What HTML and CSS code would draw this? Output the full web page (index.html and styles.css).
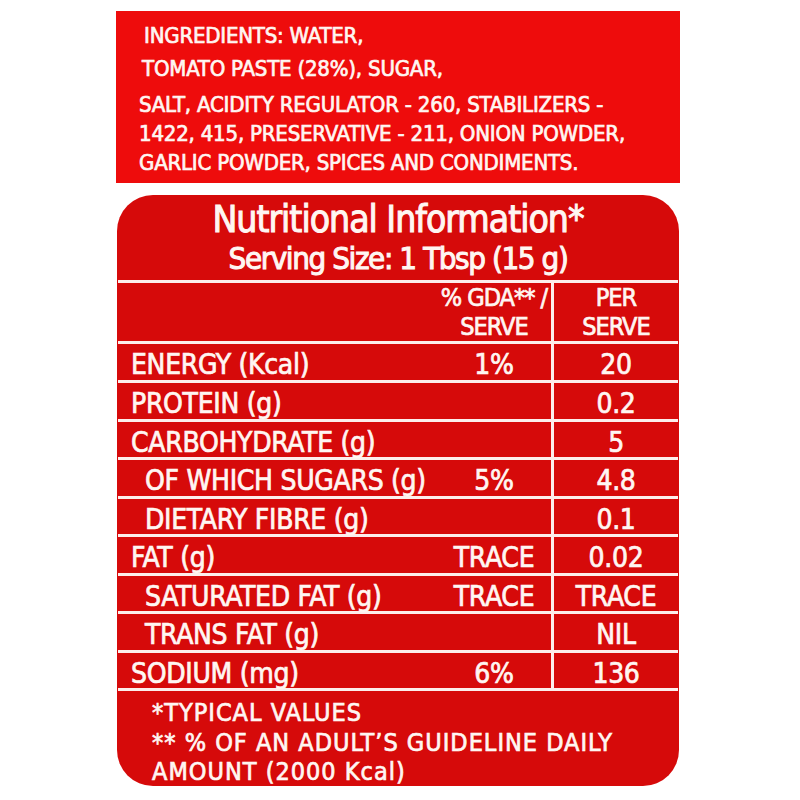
FILE: index.html
```html
<!DOCTYPE html>
<html lang="en">
<head>
<meta charset="utf-8">
<title>Nutritional Information</title>
<link rel="stylesheet" href="styles.css">
</head>
<body>
<div class="page">
  <section class="ingredients">
    <p class="ing-line1">INGREDIENTS: WATER,</p>
    <p class="ing-line2">TOMATO PASTE (28%), SUGAR,</p>
    <p class="ing-para">SALT, ACIDITY REGULATOR - 260, STABILIZERS -<br>1422, 415, PRESERVATIVE - 211, ONION POWDER,<br>GARLIC POWDER, SPICES AND CONDIMENTS.</p>
  </section>

  <section class="nutrition">
    <header class="nut-head">
      <h1 class="nut-title">Nutritional Information*</h1>
      <p class="nut-serving">Serving Size: 1 Tbsp (15 g)</p>
    </header>

    <div class="table">
      <div class="row row-head">
        <div class="cell-main"><span class="label"></span><span class="mid">% GDA** /<br>SERVE</span></div>
        <div class="cell-val">PER<br>SERVE</div>
      </div>
      <div class="row">
        <div class="cell-main"><span class="label">ENERGY (Kcal)</span><span class="mid">1%</span></div>
        <div class="cell-val">20</div>
      </div>
      <div class="row">
        <div class="cell-main"><span class="label">PROTEIN (g)</span><span class="mid"></span></div>
        <div class="cell-val">0.2</div>
      </div>
      <div class="row">
        <div class="cell-main"><span class="label">CARBOHYDRATE (g)</span><span class="mid"></span></div>
        <div class="cell-val">5</div>
      </div>
      <div class="row indent">
        <div class="cell-main"><span class="label">OF WHICH SUGARS (g)</span><span class="mid">5%</span></div>
        <div class="cell-val">4.8</div>
      </div>
      <div class="row indent">
        <div class="cell-main"><span class="label">DIETARY FIBRE (g)</span><span class="mid"></span></div>
        <div class="cell-val">0.1</div>
      </div>
      <div class="row">
        <div class="cell-main"><span class="label">FAT (g)</span><span class="mid">TRACE</span></div>
        <div class="cell-val">0.02</div>
      </div>
      <div class="row indent">
        <div class="cell-main"><span class="label">SATURATED FAT (g)</span><span class="mid">TRACE</span></div>
        <div class="cell-val">TRACE</div>
      </div>
      <div class="row indent">
        <div class="cell-main"><span class="label">TRANS FAT (g)</span><span class="mid"></span></div>
        <div class="cell-val">NIL</div>
      </div>
      <div class="row">
        <div class="cell-main"><span class="label">SODIUM (mg)</span><span class="mid">6%</span></div>
        <div class="cell-val">136</div>
      </div>
    </div>

    <footer class="notes">
      <p>*TYPICAL VALUES</p>
      <p>** % OF AN ADULT’S GUIDELINE DAILY</p>
      <p>AMOUNT (2000 Kcal)</p>
    </footer>
  </section>
</div>
</body>
</html>
```

FILE: styles.css
```css
* {
  box-sizing: border-box;
  margin: 0;
  padding: 0;
}

body {
  background: #ffffff;
  font-family: "DejaVu Sans Condensed", "DejaVu Sans", sans-serif;
  font-stretch: condensed;
  color: #fff6f2;
  -webkit-text-stroke: 0.7px #fff6f2;
}

.page {
  padding: 11px 0 0 116px;
}

/* Ingredients panel */
.ingredients {
  width: 564px;
  height: 172px;
  background: #ee0c0c;
  padding-top: 10px;
  font-size: 22px;
  line-height: 29px;
  letter-spacing: -0.2px;
}

.ing-line1 {
  padding-left: 28px;
}

.ing-line2 {
  padding-left: 26px;
  margin-top: 4px;
}

.ing-para {
  padding-left: 23px;
  margin-top: 7px;
}

/* Nutrition panel */
.nutrition {
  margin: 12px 0 0 1px;
  width: 562px;
  height: 591px;
  background: #d60a0a;
  border-radius: 36px;
  overflow: hidden;
  display: flex;
  flex-direction: column;
}

.nut-head {
  height: 87px;
  padding-top: 5px;
  text-align: center;
  -webkit-text-stroke: 1px #fff6f2;
}

.nut-title {
  font-size: 37px;
  line-height: 40px;
  font-weight: normal;
  letter-spacing: -1px;
}

.nut-serving {
  font-size: 31px;
  line-height: 36px;
  letter-spacing: -1.4px;
}

.table {
  margin: 0 1px;
  background: #fdeeec;
  padding: 3px 0;
  display: flex;
  flex-direction: column;
  gap: 3px;
}

.row {
  display: flex;
  gap: 3px;
  height: 35.56px;
  font-size: 28px;
  line-height: 29.5px;
  letter-spacing: -0.3px;
}

.row-head {
  height: 58px;
  font-size: 25px;
  line-height: 29px;
  letter-spacing: -1px;
}

.cell-main {
  flex: 1;
  display: flex;
  background: #d60a0a;
  padding-top: 6px;
}

.cell-val {
  width: 124px;
  background: #d60a0a;
  text-align: center;
  padding-top: 6px;
}

.row-head .cell-main,
.row-head .cell-val {
  padding-top: 0;
}

.label {
  flex: 1;
  padding-left: 13px;
  white-space: nowrap;
}

.indent .label {
  padding-left: 27px;
}

.mid {
  width: 114px;
  text-align: center;
  white-space: nowrap;
}

.notes {
  flex: 1;
  padding: 7px 0 0 35px;
  font-size: 25px;
  line-height: 29.2px;
  letter-spacing: 1px;
}
```
